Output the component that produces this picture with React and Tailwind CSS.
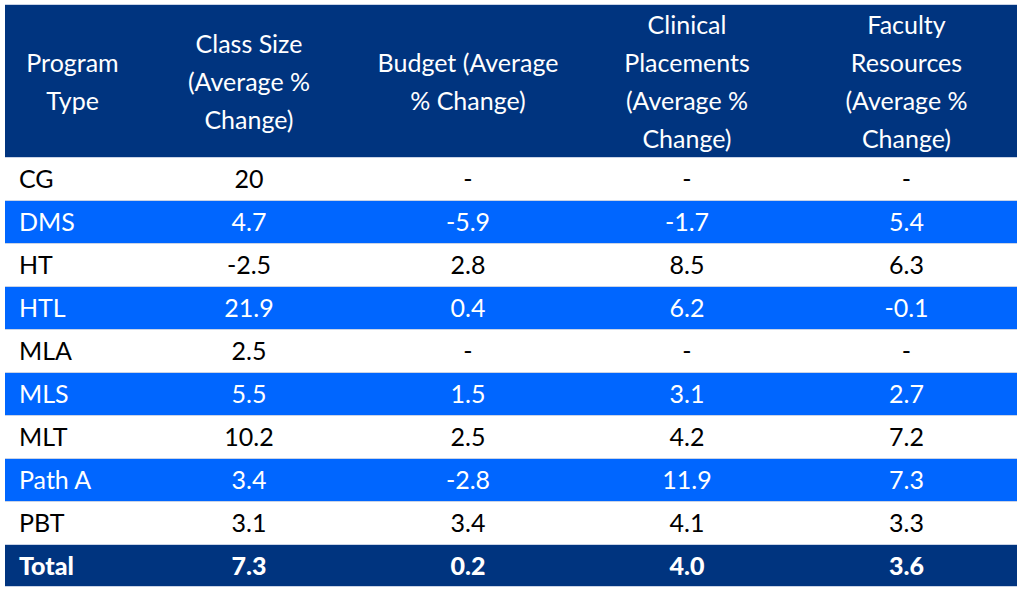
import React from 'react';

const rows = [
  ['CG', '20', '-', '-', '-'],
  ['DMS', '4.7', '-5.9', '-1.7', '5.4'],
  ['HT', '-2.5', '2.8', '8.5', '6.3'],
  ['HTL', '21.9', '0.4', '6.2', '-0.1'],
  ['MLA', '2.5', '-', '-', '-'],
  ['MLS', '5.5', '1.5', '3.1', '2.7'],
  ['MLT', '10.2', '2.5', '4.2', '7.2'],
  ['Path A', '3.4', '-2.8', '11.9', '7.3'],
  ['PBT', '3.1', '3.4', '4.1', '3.3'],
];

const headers = [
  ['Program', 'Type'],
  ['Class Size', '(Average %', 'Change)'],
  ['Budget (Average', '% Change)'],
  ['Clinical', 'Placements', '(Average %', 'Change)'],
  ['Faculty', 'Resources', '(Average %', 'Change)'],
];

export default function App() {
  return (
    <div className="w-[1024px] h-[592px] bg-white pt-[4px] pl-[5px]" style={{ fontFamily: 'Lato, "Noto Sans", sans-serif' }}>
      <table className="table-fixed border-collapse w-[1012px] text-[25px]">
        <colgroup>
          <col className="w-[135px]" />
          <col className="w-[218px]" />
          <col className="w-[220px]" />
          <col className="w-[218px]" />
          <col className="w-[221px]" />
        </colgroup>
        <thead>
          <tr className="bg-[#00347f] text-white h-[152px] border-y border-[#c9d3e6]">
            {headers.map((lines, i) => (
              <th key={i} className="font-normal text-center align-middle leading-[38px] p-0">
                {lines.map((l, j) => (
                  <div key={j}>{l}</div>
                ))}
              </th>
            ))}
          </tr>
        </thead>
        <tbody>
          {rows.map((r, i) => {
            const blue = i % 2 === 1;
            return (
              <tr
                key={r[0]}
                className={`h-[43px] border-y border-[#c9d3e6] ${blue ? 'bg-[#0066ff] text-white' : 'bg-white text-black'}`}
              >
                {r.map((c, j) => (
                  <td key={j} className={`p-0 ${j === 0 ? 'text-left pl-[14px]' : 'text-center'}`}>
                    {c}
                  </td>
                ))}
              </tr>
            );
          })}
          <tr className="h-[42px] border-y border-[#c9d3e6] bg-[#00347f] text-white font-black">
            {['Total', '7.3', '0.2', '4.0', '3.6'].map((c, j) => (
              <td key={j} className={`p-0 ${j === 0 ? 'text-left pl-[14px]' : 'text-center'}`}>
                {c}
              </td>
            ))}
          </tr>
        </tbody>
      </table>
    </div>
  );
}
